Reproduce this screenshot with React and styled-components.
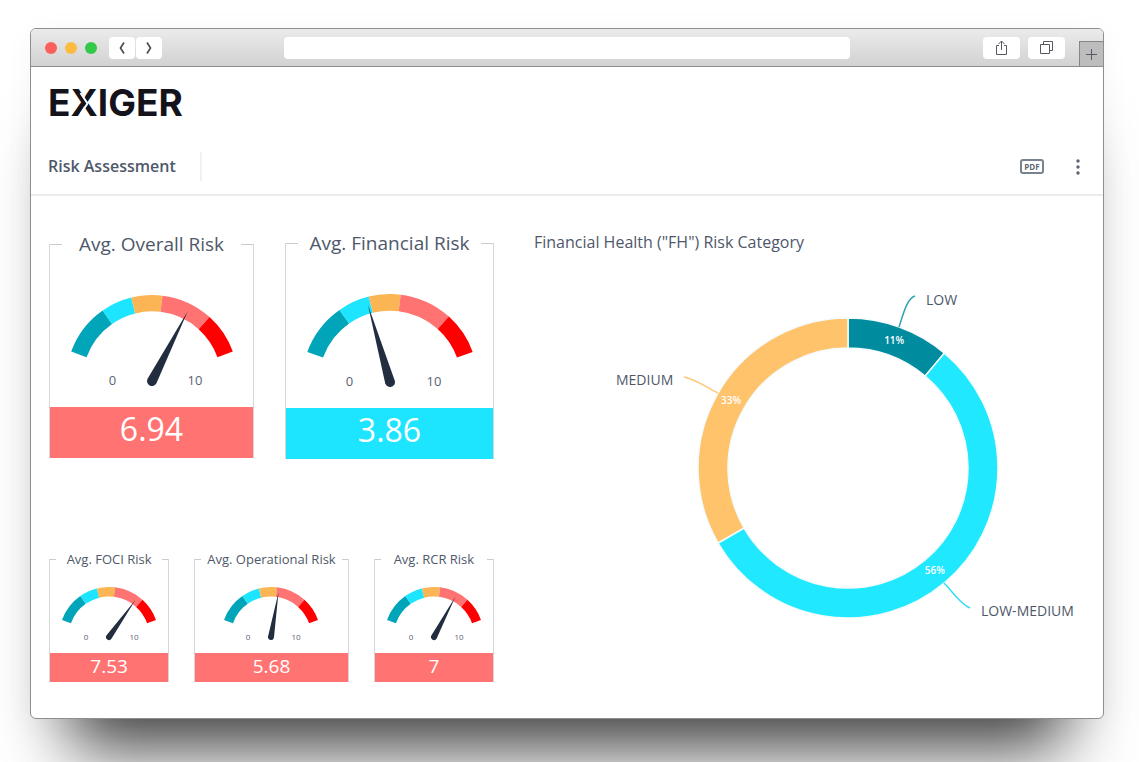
import React from "react";
import styled, { createGlobalStyle } from "styled-components";

const BANDS = [
  { from: 0, to: 2.5, color: "#00a5ba" },
  { from: 2.5, to: 4, color: "#1de5ff" },
  { from: 4, to: 5.5, color: "#fbb555" },
  { from: 5.5, to: 8, color: "#ff7472" },
  { from: 8, to: 10, color: "#ff0000" },
];

const SLICES = [
  { label: "LOW", percent: "11%", from: 0, to: 40, color: "#008b9e" },
  { label: "LOW-MEDIUM", percent: "56%", from: 40, to: 240, color: "#20e8ff" },
  { label: "MEDIUM", percent: "33%", from: 240, to: 360, color: "#ffc36c" },
];

// angle in degrees, clockwise from twelve o'clock
const point = (cx, cy, r, angle) => {
  const a = (angle * Math.PI) / 180;
  return [cx + r * Math.sin(a), cy - r * Math.cos(a)];
};

const ring = (cx, cy, outer, inner, from, to) => {
  const [x1, y1] = point(cx, cy, outer, from);
  const [x2, y2] = point(cx, cy, outer, to);
  const [x3, y3] = point(cx, cy, inner, to);
  const [x4, y4] = point(cx, cy, inner, from);
  const large = to - from > 180 ? 1 : 0;
  return `M${x1} ${y1}A${outer} ${outer} 0 ${large} 1 ${x2} ${y2}L${x3} ${y3}A${inner} ${inner} 0 ${large} 0 ${x4} ${y4}Z`;
};

const toAngle = (value) => value * 14 - 70;

function Gauge({ value, radius, small }) {
  const hub = small ? 3 : 5;
  const width = radius * 2;
  const height = radius + (small ? 8 : 12);
  return (
    <svg width={width} height={height} viewBox={`0 0 ${width} ${height}`}>
      {BANDS.map((band) => (
        <path
          key={band.from}
          d={ring(radius, radius, radius, radius * 0.81, toAngle(band.from), toAngle(band.to))}
          fill={band.color}
        />
      ))}
      <g transform={`translate(${radius} ${radius}) rotate(${toAngle(value)})`}>
        <path
          d={`M${-hub} 0L0 ${-radius * 0.91}L${hub} 0A${hub} ${hub} 0 0 1 ${-hub} 0Z`}
          fill="#222d40"
        />
      </g>
      <ScaleText $small={small} x={radius * 0.54} y={radius + (small ? 3 : 4)}>
        0
      </ScaleText>
      <ScaleText $small={small} x={radius * 1.5} y={radius + (small ? 3 : 4)}>
        10
      </ScaleText>
    </svg>
  );
}

function RiskCard({ title, value, radius, grow, color, small }) {
  return (
    <Card $grow={grow}>
      <CardHeader $small={small}>
        <h2>{title}</h2>
      </CardHeader>
      <Dial $small={small}>
        <Gauge value={value} radius={radius} small={small} />
      </Dial>
      <Score $color={color} $small={small}>
        {value}
      </Score>
    </Card>
  );
}

function Donut() {
  return (
    <Chart viewBox="0 0 552 360" role="img" aria-label="Financial health risk by category">
      {SLICES.map((slice) => {
        const middle = (slice.from + slice.to) / 2;
        const [x, y] = point(314, 200, 135, middle);
        return (
          <g key={slice.label}>
            <path
              d={ring(314, 200, 150, 120, slice.from, slice.to)}
              fill={slice.color}
              stroke="#f4fbfc"
              strokeWidth="1.5"
            />
            <PercentText x={x} y={y + 3}>
              {slice.percent}
            </PercentText>
          </g>
        );
      })}
      <g fill="none" strokeWidth="1.5">
        <path d="M365 59C369 47 373 30 381 28" stroke="#2fa3b1" />
        <path d="M410 315C418 323 427 337 436 340" stroke="#35def2" />
        <path d="M184 125C174 120 161 111 150 109" stroke="#ffc778" />
      </g>
      <SliceText x="392" y="37">LOW</SliceText>
      <SliceText x="447" y="348">LOW-MEDIUM</SliceText>
      <SliceText x="82" y="117">MEDIUM</SliceText>
    </Chart>
  );
}

function BrowserBar() {
  return (
    <Bar>
      <BarLeft>
        <Lights>
          <Light $color="#fc605c" />
          <Light $color="#fdbc40" />
          <Light $color="#34c84a" />
        </Lights>
        <NavButtons>
          <NavButton aria-label="Back">
            <svg width="8" height="14" viewBox="0 0 8 14">
              <path d="M6 1.5L2.500 7L6 12.500" />
            </svg>
          </NavButton>
          <NavButton aria-label="Forward">
            <svg width="8" height="14" viewBox="0 0 8 14">
              <path d="M2 1.500L5.500 7L2 12.500" />
            </svg>
          </NavButton>
        </NavButtons>
      </BarLeft>
      <Address type="text" aria-label="Address" />
      <BarRight>
        <ToolButton aria-label="Share">
          <svg width="13" height="16" viewBox="0 0 13 16">
            <path d="M4 5.500H1.500v9h10v-9H9M6.500 10V1M3.500 4l3-3 3 3" />
          </svg>
        </ToolButton>
        <ToolButton aria-label="Show tabs">
          <svg width="13" height="13" viewBox="0 0 13 13">
            <path d="M.5 3.500h9v9h-9zM3.500 3.500v-3h9v9h-3" />
          </svg>
        </ToolButton>
        <NewTab aria-label="New tab">
          <svg width="13" height="13" viewBox="0 0 13 13">
            <path d="M6.500 1v11M1 6.500h11" />
          </svg>
        </NewTab>
      </BarRight>
    </Bar>
  );
}

function App() {
  return (
    <Page>
      <GlobalStyle />
      <Window>
        <BrowserBar />
        <Brand>
          E
          <BrandX>
            X
            <svg viewBox="0 0 27 27">
              <path d="M10.500 3L17.500 13.500L10.500 24" />
            </svg>
          </BrandX>
          IGER
        </Brand>
        <Toolbar>
          <h1>Risk Assessment</h1>
          <Actions>
            <PdfButton>PDF</PdfButton>
            <MoreButton aria-label="More options">
              <svg width="6" height="16" viewBox="0 0 6 16">
                <circle cx="3" cy="2" r="1.700" />
                <circle cx="3" cy="8" r="1.700" />
                <circle cx="3" cy="14" r="1.700" />
              </svg>
            </MoreButton>
          </Actions>
        </Toolbar>
        <Content>
          <Cards>
            <CardRow $gap={31}>
              <RiskCard title="Avg. Overall Risk" value={6.94} radius={86} grow={205} color="#ff7472" />
              <RiskCard title="Avg. Financial Risk" value={3.86} radius={88} grow={209} color="#1de5ff" />
            </CardRow>
            <CardRow $gap={25}>
              <RiskCard small title="Avg. FOCI Risk" value={7.53} radius={50} grow={120} color="#ff7472" />
              <RiskCard small title="Avg. Operational Risk" value={5.68} radius={50} grow={155} color="#ff7472" />
              <RiskCard small title="Avg. RCR Risk" value={7} radius={50} grow={120} color="#ff7472" />
            </CardRow>
          </Cards>
          <Category>
            <h2>Financial Health ("FH") Risk Category</h2>
            <Donut />
          </Category>
        </Content>
      </Window>
    </Page>
  );
}

const GlobalStyle = createGlobalStyle`
  * {
    box-sizing: border-box;
  }
  body {
    margin: 0;
    background: #fff;
    color: #4f586a;
    font-family: "Open Sans", sans-serif;
  }
  h1, h2 {
    margin: 0;
    font-weight: 400;
  }
  button, input {
    margin: 0;
    padding: 0;
    border: none;
    font-family: inherit;
    color: inherit;
  }
  svg {
    display: block;
  }
`;

const Page = styled.div`
  min-height: 100vh;
  padding: 28px 35px 44px 30px;
  overflow: hidden;
`;

const Window = styled.div`
  border: 1px solid #8e8e8e;
  border-radius: 6px;
  background: #fff;
  box-shadow: 0 70px 64px -40px rgba(0, 0, 0, 0.75),
    0 4px 30px rgba(0, 0, 0, 0.04);
`;

const Bar = styled.div`
  display: grid;
  grid-template-columns: 1fr minmax(0, 566px) 1fr;
  align-items: center;
  height: 38px;
  border-bottom: 1px solid #8e8e8e;
  border-radius: 5px 5px 0 0;
  background: linear-gradient(#ebebeb, #d3d2d3);
`;

const BarLeft = styled.div`
  display: flex;
  align-items: center;
  gap: 12px;
  padding-left: 14px;
`;

const Lights = styled.div`
  display: flex;
  gap: 8px;
`;

const Light = styled.span`
  width: 12px;
  height: 12px;
  border-radius: 50%;
  background: ${(props) => props.$color};
`;

const NavButtons = styled.div`
  display: flex;
  gap: 1px;
`;

const NavButton = styled.button`
  display: flex;
  align-items: center;
  justify-content: center;
  width: 26px;
  height: 22px;
  border-radius: 4px;
  background: #fff;
  path {
    fill: none;
    stroke: #4c4c55;
    stroke-width: 1.7;
  }
`;

const Address = styled.input`
  width: 100%;
  height: 22px;
  border-radius: 4px;
  background: #fff;
`;

const BarRight = styled.div`
  display: flex;
  align-items: center;
  justify-content: flex-end;
  gap: 8px;
  height: 100%;
  path {
    fill: none;
    stroke: #5a5763;
    stroke-width: 1;
  }
`;

const ToolButton = styled.button`
  display: flex;
  align-items: center;
  justify-content: center;
  width: 37px;
  height: 22px;
  border-radius: 4px;
  background: #fff;
`;

const NewTab = styled.button`
  display: flex;
  align-items: center;
  justify-content: center;
  align-self: flex-end;
  width: 24px;
  height: 25px;
  margin-left: 6px;
  border-top: 1px solid #87858b;
  border-left: 1px solid #87858b;
  background: #bdbdbe;
`;

const Brand = styled.div`
  display: flex;
  align-items: center;
  height: 72px;
  padding: 0 17px;
  color: #14131b;
  font-family: Inter, sans-serif;
  font-size: 37px;
  font-weight: 700;
  line-height: 72px;
`;

const BrandX = styled.span`
  position: relative;
  svg {
    position: absolute;
    top: 23px;
    left: 0;
    width: 27px;
    height: 27px;
  }
  path {
    fill: none;
    stroke: #fff;
    stroke-width: 2;
  }
`;

const Toolbar = styled.div`
  display: flex;
  align-items: center;
  justify-content: space-between;
  height: 57px;
  padding: 0 17px;
  border-bottom: 2px solid #ebebeb;
  h1 {
    padding-right: 24px;
    border-right: 2px solid #f1f1f1;
    font-size: 16px;
    font-weight: 600;
    line-height: 29px;
  }
`;

const Actions = styled.div`
  display: flex;
  align-items: center;
  gap: 26px;
`;

const PdfButton = styled.button`
  width: 24px;
  height: 15px;
  border: 2px solid #7a8290;
  border-radius: 3px;
  background: none;
  color: #5f6877;
  font-size: 8px;
  font-weight: 700;
  line-height: 11px;
`;

const MoreButton = styled.button`
  display: flex;
  justify-content: center;
  width: 16px;
  background: none;
  fill: #5b6474;
`;

const Content = styled.div`
  display: grid;
  grid-template-columns: minmax(0, 445fr) minmax(0, 552fr);
  gap: 40px;
  padding: 0 17px 36px 18px;
`;

const Cards = styled.div`
  display: flex;
  flex-direction: column;
  gap: 100px;
  padding-top: 47px;
`;

const CardRow = styled.div`
  display: flex;
  align-items: center;
  gap: ${(props) => props.$gap}px;
`;

const Card = styled.section`
  flex: ${(props) => props.$grow} 1 0;
  min-width: 0;
  border: solid #d6d6d8;
  border-width: 0 1px;
`;

const CardHeader = styled.header`
  display: flex;
  align-items: center;
  justify-content: space-between;
  height: ${(props) => (props.$small ? 18 : 26)}px;
  margin-top: ${(props) => (props.$small ? -9 : -13)}px;
  &::before,
  &::after {
    content: "";
    width: ${(props) => (props.$small ? 6 : 12)}px;
    height: 1px;
    background: #cbcbcd;
  }
  h2 {
    font-size: ${(props) => (props.$small ? 13 : 19)}px;
    line-height: ${(props) => (props.$small ? 18 : 26)}px;
    white-space: nowrap;
  }
`;

const Dial = styled.div`
  display: flex;
  justify-content: center;
  padding: ${(props) => (props.$small ? "19px 0 8px" : "38px 0 14px")};
`;

const ScaleText = styled.text`
  font-size: ${(props) => (props.$small ? 8 : 13)}px;
  fill: #5a6373;
  text-anchor: middle;
`;

const Score = styled.div`
  height: ${(props) => (props.$small ? 29 : 51)}px;
  background: ${(props) => props.$color};
  color: #fff;
  font-size: ${(props) => (props.$small ? 19 : 32)}px;
  line-height: ${(props) => (props.$small ? 26 : 44)}px;
  text-align: center;
`;

const Category = styled.section`
  padding-top: 34px;
  h2 {
    font-size: 16px;
    line-height: 24px;
  }
`;

const Chart = styled.svg`
  width: 100%;
  margin-top: 14px;
`;

const PercentText = styled.text`
  fill: #fff;
  font-size: 10px;
  font-weight: 600;
  text-anchor: middle;
`;

const SliceText = styled.text`
  fill: #4f586a;
  font-size: 14px;
`;

export default App;
